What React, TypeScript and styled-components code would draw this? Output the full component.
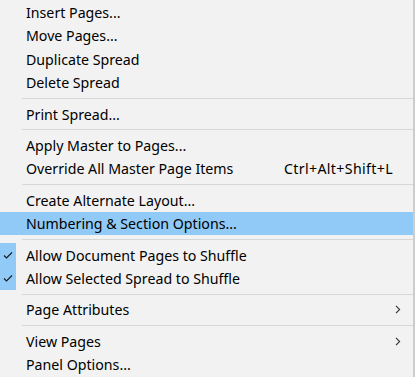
import styled, { createGlobalStyle } from 'styled-components'

const GlobalStyle = createGlobalStyle`
	html, body {
		margin: 0;
		padding: 0;
		background: #f2f2f2;
	}
	body {
		font-family: 'Noto Sans', 'Open Sans', sans-serif;
	}
`

type Entry =
	| { kind: 'item'; label: string; shortcut?: string; checked?: boolean; active?: boolean; submenu?: boolean }
	| { kind: 'sep' }

const entries: Entry[] = [
	{ kind: 'item', label: 'Insert Pages...' },
	{ kind: 'item', label: 'Move Pages...' },
	{ kind: 'item', label: 'Duplicate Spread' },
	{ kind: 'item', label: 'Delete Spread' },
	{ kind: 'sep' },
	{ kind: 'item', label: 'Print Spread...' },
	{ kind: 'sep' },
	{ kind: 'item', label: 'Apply Master to Pages...' },
	{ kind: 'item', label: 'Override All Master Page Items', shortcut: 'Ctrl+Alt+Shift+L' },
	{ kind: 'sep' },
	{ kind: 'item', label: 'Create Alternate Layout...' },
	{ kind: 'item', label: 'Numbering & Section Options...', active: true },
	{ kind: 'sep' },
	{ kind: 'item', label: 'Allow Document Pages to Shuffle', checked: true },
	{ kind: 'item', label: 'Allow Selected Spread to Shuffle', checked: true },
	{ kind: 'sep' },
	{ kind: 'item', label: 'Page Attributes', submenu: true },
	{ kind: 'sep' },
	{ kind: 'item', label: 'View Pages', submenu: true },
	{ kind: 'item', label: 'Panel Options...' },
]

const CheckIcon = () => (
	<svg width='10' height='9' viewBox='0 0 10 9'>
		<path d='M1 4.5 L3.5 7 L9 1.5' fill='none' stroke='#1a1a1a' strokeWidth='1.1' />
	</svg>
)

const ChevronIcon = () => (
	<svg width='6' height='9' viewBox='0 0 6 9'>
		<path d='M1 0.8 L4.6 4.5 L1 8.2' fill='none' stroke='#333' strokeWidth='1.1' />
	</svg>
)

/** Pages panel flyout menu */
const App = () => {
	return (
		<>
			<GlobalStyle />
			<Menu>
				{entries.map((entry, idx) => {
					if (entry.kind === 'sep') return <Separator key={idx} />
					return (
						<Item key={idx} $active={entry.active}>
							<CheckCell $checked={entry.checked}>{entry.checked && <CheckIcon />}</CheckCell>
							<Label>{entry.label}</Label>
							{entry.shortcut && <Shortcut>{entry.shortcut}</Shortcut>}
							{entry.submenu && (
								<Arrow>
									<ChevronIcon />
								</Arrow>
							)}
						</Item>
					)
				})}
			</Menu>
		</>
	)
}

export default App

const Menu = styled.div`
	display: flex;
	flex-direction: column;
	width: 415px;
	height: 377px;
	box-sizing: border-box;
	padding-top: 0.8px;
	border-right: 2px solid #cdcdcd;
	background: #f2f2f2;
	overflow: hidden;
`

const Item = styled.div<{ $active?: boolean }>`
	display: flex;
	align-items: center;
	flex: none;
	height: 23.4px;
	padding-right: 20px;
	background: ${(p) => (p.$active ? '#91c9f7' : 'transparent')};
	color: #000;
	font-size: 14.2px;
	white-space: nowrap;
`

const CheckCell = styled.div<{ $checked?: boolean }>`
	display: flex;
	align-items: center;
	justify-content: center;
	align-self: stretch;
	width: 16px;
	margin-right: 10px;
	background: ${(p) => (p.$checked ? '#91c9f7' : 'transparent')};
`

const Label = styled.span`
	flex: 1;
`

const Shortcut = styled.span`
	margin-left: 24px;
	letter-spacing: 0.35px;
`

const Arrow = styled.span`
	display: flex;
	align-items: center;
	margin-right: -8px;
`

const Separator = styled.div`
	flex: none;
	height: 1px;
	margin: 3.5px 0 3.5px 22px;
	background: #d7d7d7;
`
